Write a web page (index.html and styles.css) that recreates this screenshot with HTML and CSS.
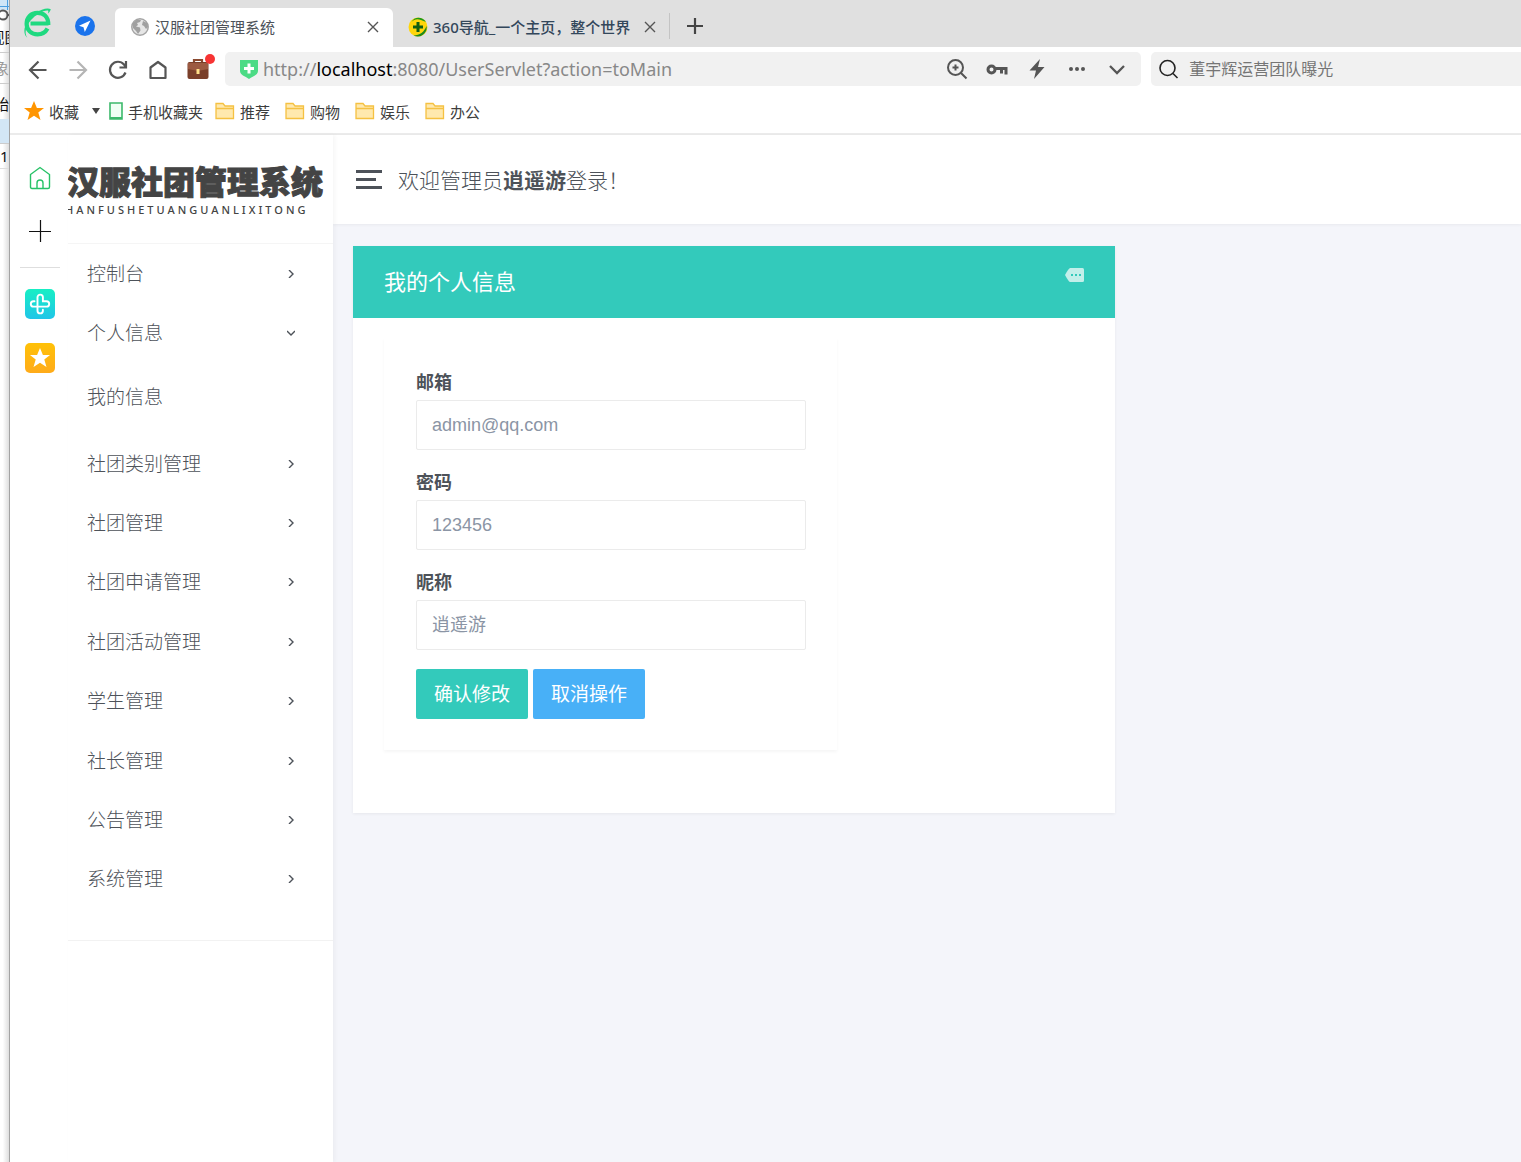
FILE: index.html
```html
<!DOCTYPE html>
<html lang="zh-CN">
<head>
<meta charset="utf-8">
<title>汉服社团管理系统</title>
<link rel="stylesheet" href="styles.css">
</head>
<body>
<div class="desktop">
  <div class="peek" aria-hidden="true">
    <div class="peek-top"><svg width="9" height="30" viewBox="0 0 9 30"><path d="M0 6.500h9M7.500 0v10" stroke="#4b9fe0" fill="none"/><circle cx="3" cy="15" r="4.500" fill="none" stroke="#555" stroke-width="2"/><path d="M7 15h2" stroke="#555" stroke-width="2"/></svg></div>
    <div class="peek-row peek-menu"><span>视图</span></div>
    <div class="peek-row peek-search"><span>对象</span></div>
    <div class="peek-row peek-start"><span>开始</span></div>
    <div class="peek-band"></div>
    <div class="peek-num">1</div>
  </div>

  <div class="browser">
    <header class="tabs">
      <svg class="brand" width="30" height="32" viewBox="0 0 30 32"><path d="M8.500 16.500H26.500M26.300 18C26.500 9 21 5.800 15.500 5.800 9 5.800 4.600 10.500 4.600 16.800c0 6.500 4.900 10.500 10.900 10.500 4.500 0 8-2 10-5.800" fill="none" stroke="#1fd980" stroke-width="4.200"/><path d="M5.500 31C-1 26 3 13 14 6 19 2.500 25 .5 28.800 2.200c-.8 2-1.500 3.500-2.800 4.300.4-1.500.4-2.400 0-3C21 3 14 7.500 9 13 3.500 19 2 26 5.500 31z" fill="#1fd980"/></svg>
      <svg class="send" width="20" height="20" viewBox="0 0 20 20"><circle cx="10" cy="10" r="10" fill="#1a73ec"/><path d="M15.500 4.500 4 9.800l4.500 1.400 1.300 4.800z" fill="#fff"/></svg>
      <div class="tab tab-active">
        <svg width="18" height="18" viewBox="0 0 18 18"><circle cx="9" cy="9" r="8.200" fill="#e6e6e6" stroke="#a5a5a5" stroke-width="1.500"/><path d="M2 5 6 1.500l4 .5-1 2-3 1 1 2-2 1.500 4 1 .5 3L7 16l-2-3-3-3zM12 3l4 2 1 4-2 2-2-3-2-1z" fill="#a0a0a0"/></svg>
        <span class="tab-title">汉服社团管理系统</span>
        <button class="close" aria-label="关闭标签页"><svg width="12" height="12" viewBox="0 0 12 12"><path d="m1 1 10 10M11 1 1 11"/></svg></button>
      </div>
      <div class="tab tab-second">
        <svg width="20" height="20" viewBox="0 0 20 20"><circle cx="10" cy="10" r="9.500" fill="#ffd60a"/><path d="M3.500 5C6 0 14-1 18 5l-5-2C9 1.500 6 2.500 3.500 5z" fill="#1c9a1c"/><path d="M18.500 9a9 9 0 0 1-13 9.500C12 18.500 16 15 18.500 9z" fill="#1c8a1c"/><path d="M10 5v10M5 10h10" stroke="#115f11" stroke-width="3"/></svg>
        <span class="tab-title">360导航_一个主页，整个世界</span>
        <button class="close" aria-label="关闭标签页"><svg width="12" height="12" viewBox="0 0 12 12"><path d="m1 1 10 10M11 1 1 11"/></svg></button>
      </div>
      <button class="new-tab" aria-label="新标签页"><svg width="16" height="16" viewBox="0 0 16 16"><path d="M8 0v16M0 8h16" stroke="#444" stroke-width="2.200"/></svg></button>
    </header>

    <div class="toolbar">
      <button class="tool" aria-label="后退"><svg width="20" height="20" viewBox="0 0 20 20"><path d="M18.500 10H2M10.500 1.500 2 10l8.500 8.500" stroke="#555"/></svg></button>
      <button class="tool" aria-label="前进"><svg width="20" height="20" viewBox="0 0 20 20"><path d="M1.500 10H18M9.500 1.500 18 10l-8.500 8.500" stroke="#b5b5b5"/></svg></button>
      <button class="tool" aria-label="刷新"><svg width="20" height="20" viewBox="0 0 20 20"><path d="M17.500 12.500A8 8 0 1 1 16 4.500l1.500 2M18 1v6.500h-6.500" stroke="#555"/></svg></button>
      <button class="tool" aria-label="主页"><svg width="20" height="20" viewBox="0 0 20 20"><path d="m10 2 7.500 5.500V18h-15V7.500z" stroke="#555" stroke-linejoin="round"/></svg></button>
      <button class="tool tool-case" aria-label="工具箱"><svg width="22" height="22" viewBox="0 0 22 22"><path d="M7 5V2h8v3" stroke="#8a4a30"/><rect x="0.500" y="4" width="21" height="17" rx="2" fill="#7a3f2a"/><path d="M1 5h20v6l-10 2-10-2z" fill="#9c5a41"/><rect x="9.500" y="11" width="3" height="5" fill="#ffe08a"/></svg><i class="dot"></i></button>
      <div class="omnibox">
        <svg width="18" height="20" viewBox="0 0 18 20"><path d="M0 1h18v11c0 4-5 5-9 8-4-3-9-4-9-8z" fill="#4cdb85"/><path d="M9 4.500v10M4 9.500h10" stroke="#fff" stroke-width="3"/></svg>
        <div class="url" role="textbox" aria-label="地址">http://<b>localhost</b>:8080/UserServlet?action=toMain</div>
        <div class="omni-actions">
          <button aria-label="缩放"><svg width="22" height="22" viewBox="0 0 22 22"><circle cx="9.500" cy="9.500" r="7.500"/><path d="m15 15 5.500 5.500M9.500 6.500v6M6.500 9.500h6"/></svg></button>
          <button aria-label="密码"><svg width="22" height="22" viewBox="0 0 22 22"><circle cx="5.500" cy="11.500" r="3.500" stroke-width="3"/><path d="M9 10.500h11v6M15.500 11v4.500" stroke-width="3"/></svg></button>
          <button aria-label="极速模式"><svg width="22" height="22" viewBox="0 0 22 22"><path d="M14 1 3.500 12.500H10L8 21l10.500-12H12z" fill="#555" stroke="none"/></svg></button>
          <button aria-label="更多"><svg width="22" height="22" viewBox="0 0 22 22"><g fill="#555" stroke="none"><circle cx="5" cy="11" r="2"/><circle cx="11" cy="11" r="2"/><circle cx="17" cy="11" r="2"/></g></svg></button>
          <button aria-label="展开"><svg width="22" height="22" viewBox="0 0 22 22"><path d="m4 8 7 7 7-7" stroke-width="2.300"/></svg></button>
        </div>
      </div>
      <div class="search">
        <svg width="20" height="20" viewBox="0 0 20 20"><circle cx="8.500" cy="9" r="7.500"/><path d="m14 14.500 4.500 4.500"/></svg>
        <input type="text" aria-label="搜索" placeholder="董宇辉运营团队曝光">
      </div>
    </div>

    <nav class="bookmarks" aria-label="收藏栏">
      <a href="#" class="fav"><svg width="20" height="20" viewBox="0 0 20 20"><path d="m10 0 2.900 7H20l-5.700 4.600L16.500 19 10 14.700 3.500 19l2.200-7.400L0 7h7.100z" fill="#ff9500"/></svg>收藏</a>
      <button class="caret" aria-label="收藏菜单"><svg width="8" height="6" viewBox="0 0 8 6"><path d="M0 0h8L4 6z" fill="#444"/></svg></button>
      <a href="#" class="phone"><svg width="14" height="18" viewBox="0 0 14 18"><path d="M1 1h12v16H1z" fill="#f0fff4" stroke="#3cb96b" stroke-width="1.600"/><path d="M1 16h12" stroke="#3cb96b" stroke-width="2"/></svg>手机收藏夹</a>
      <a href="#"><svg width="20" height="18" viewBox="0 0 20 18"><path d="M1 16.500v-15h7l2 2.500h8.500v12.500zM1 6.500h17.500" fill="#ffe9ae" stroke="#f5c142" stroke-width="1.300"/></svg>推荐</a>
      <a href="#"><svg width="20" height="18" viewBox="0 0 20 18"><path d="M1 16.500v-15h7l2 2.500h8.500v12.500zM1 6.500h17.500" fill="#ffe9ae" stroke="#f5c142" stroke-width="1.300"/></svg>购物</a>
      <a href="#"><svg width="20" height="18" viewBox="0 0 20 18"><path d="M1 16.500v-15h7l2 2.500h8.500v12.500zM1 6.500h17.500" fill="#ffe9ae" stroke="#f5c142" stroke-width="1.300"/></svg>娱乐</a>
      <a href="#"><svg width="20" height="18" viewBox="0 0 20 18"><path d="M1 16.500v-15h7l2 2.500h8.500v12.500zM1 6.500h17.500" fill="#ffe9ae" stroke="#f5c142" stroke-width="1.300"/></svg>办公</a>
    </nav>

    <div class="page">
      <aside class="rail">
        <button aria-label="首页"><svg width="22" height="24" viewBox="0 0 22 24"><path d="M1.500 8.500 11 1.500l9.500 7V21q0 1.500-1.500 1.500H3Q1.500 22.500 1.500 21zM8 22v-5a3 3 0 0 1 6 0v5" fill="none" stroke="#27c267" stroke-width="1.400"/></svg></button>
        <button aria-label="添加"><svg width="22" height="22" viewBox="0 0 22 22"><path d="M11.500 0v22M0 11.500h22" stroke="#111" stroke-width="1.200"/></svg></button>
        <hr>
        <button class="app app-health" aria-label="健康"><svg width="22" height="22" viewBox="0 0 22 22"><path d="M8.500 13.500V4.300a2.700 2.700 0 0 1 5.400 0v3.900h3.600a2.700 2.700 0 0 1 0 5.400h-13a2.700 2.700 0 0 1 0-5.400h1M8.500 13.500v4.200a2.700 2.700 0 0 0 5.400 0v-1" fill="none" stroke="#fff" stroke-width="1.900" stroke-linecap="round"/></svg></button>
        <button class="app app-star" aria-label="收藏"><svg width="20" height="20" viewBox="0 0 20 20"><path d="m10 0 2.900 7H20l-5.700 4.600L16.500 19 10 14.700 3.500 19l2.200-7.400L0 7h7.100z" fill="#fff"/></svg></button>
      </aside>

      <aside class="sidebar">
        <div class="logo">
          <strong>汉服社团管理系统</strong>
          <small>HANFUSHETUANGUANLIXITONG</small>
        </div>
        <nav class="menu">
          <div class="menu-group menu-first">
            <a href="#">控制台<svg width="8" height="8" viewBox="0 0 8 8"><path d="m2 0 4 4-4 4"/></svg></a>
            <a href="#">个人信息<svg width="8" height="8" viewBox="0 0 8 8"><path d="m0 2 4 4 4-4"/></svg></a>
          </div>
          <a href="#" class="submenu">我的信息</a>
          <div class="menu-group menu-rest">
            <a href="#">社团类别管理<svg width="8" height="8" viewBox="0 0 8 8"><path d="m2 0 4 4-4 4"/></svg></a>
            <a href="#">社团管理<svg width="8" height="8" viewBox="0 0 8 8"><path d="m2 0 4 4-4 4"/></svg></a>
            <a href="#">社团申请管理<svg width="8" height="8" viewBox="0 0 8 8"><path d="m2 0 4 4-4 4"/></svg></a>
            <a href="#">社团活动管理<svg width="8" height="8" viewBox="0 0 8 8"><path d="m2 0 4 4-4 4"/></svg></a>
            <a href="#">学生管理<svg width="8" height="8" viewBox="0 0 8 8"><path d="m2 0 4 4-4 4"/></svg></a>
            <a href="#">社长管理<svg width="8" height="8" viewBox="0 0 8 8"><path d="m2 0 4 4-4 4"/></svg></a>
            <a href="#">公告管理<svg width="8" height="8" viewBox="0 0 8 8"><path d="m2 0 4 4-4 4"/></svg></a>
            <a href="#">系统管理<svg width="8" height="8" viewBox="0 0 8 8"><path d="m2 0 4 4-4 4"/></svg></a>
          </div>
        </nav>
      </aside>

      <div class="main">
        <header class="topbar">
          <button class="burger" aria-label="切换菜单"><svg width="26" height="20" viewBox="0 0 26 20"><path d="M0 1.500h26M0 9.500h20M0 17.500h26" stroke="#4d5259" stroke-width="3"/></svg></button>
          <p>欢迎管理员<b>逍遥游</b>登录！</p>
        </header>
        <main class="content">
          <section class="card">
            <header class="card-head">
              <h1>我的个人信息</h1>
              <svg width="19" height="14" viewBox="0 0 19 14"><path d="M5 0h12.500Q19 0 19 1.500v11q0 1.500-1.500 1.500H5Q3.500 13.500 0 7 3.500.5 5 0z" fill="#c3efea"/><path d="M6 6h2v2H6zM10 6h2v2h-2zM14 6h2v2h-2z" fill="#33cabb"/></svg>
            </header>
            <div class="card-body">
              <form class="profile">
                <label for="email">邮箱</label>
                <input id="email" type="text" placeholder="admin@qq.com">
                <label for="password">密码</label>
                <input id="password" type="text" placeholder="123456">
                <label for="nickname">昵称</label>
                <input id="nickname" type="text" placeholder="逍遥游">
                <div class="actions">
                  <button type="button" class="btn btn-primary">确认修改</button>
                  <button type="button" class="btn btn-info">取消操作</button>
                </div>
              </form>
            </div>
          </section>
        </main>
      </div>
    </div>
  </div>
</div>
</body>
</html>
```
FILE: styles.css
```css
* { box-sizing: border-box; }
body {
  margin: 0;
  font-family: "Noto Sans", "Noto Sans CJK SC", sans-serif;
  font-size: 15px;
  color: #4d5259;
}
button {
  display: flex;
  align-items: center;
  justify-content: center;
  padding: 0;
  border: 0;
  background: none;
  font: inherit;
  color: inherit;
}
a { color: inherit; text-decoration: none; }
input { font: inherit; min-width: 0; }
svg { flex: none; }

.desktop { display: grid; grid-template-columns: 9px minmax(0, 1fr); min-height: 100vh; }

/* Window showing behind the browser */
.peek { overflow: hidden; background: linear-gradient(90deg, #fff 30%, #dedede); color: #111; }
.peek-top { height: 26px; background: linear-gradient(#cfe6f7 10px, transparent 10px); }
.peek-row { display: flex; justify-content: center; align-items: center; height: 27px; border-bottom: 1px solid #ccc; line-height: 20px; }
.peek-row span { flex: none; }
.peek-menu { padding-bottom: 4px; }
.peek-search { justify-content: flex-end; height: 31px; color: #999; }
.peek-start { justify-content: flex-end; height: 35px; padding-top: 4px; border: 0; }
.peek-band { height: 25px; background: #d3e6f5; border-bottom: 1px solid #ccc; }
.peek-num { height: 25px; line-height: 25px; border-bottom: 1px solid #ddd; }

.browser { display: flex; flex-direction: column; border-left: 1px solid #a3a3a3; background: #fff; }

/* Tabs */
.tabs { display: flex; align-items: flex-end; height: 47px; background: #e0e0e0; }
.brand { margin: 0 20px 8px 12px; }
.send { margin: 0 20px 11px 3px; }
.tab { display: flex; align-items: center; height: 39px; padding: 0 15px 2px; gap: 5px; }
.tab-active { width: 278px; padding-right: 14px; padding-left: 16px; gap: 6px; background: #fff; border-radius: 6px 6px 0 0; }
.tab-title { flex: 1; white-space: nowrap; }
.tab-second { width: 276px; padding-right: 13px; color: #33475b; font-weight: 500; }
.close { width: 12px; height: 12px; }
.close svg { fill: none; stroke: #555; stroke-width: 1.4; }
.new-tab { width: 50px; height: 26px; margin-bottom: 8px; border-left: 1px solid #c4c4c4; }

/* Toolbar */
.toolbar { display: flex; align-items: center; height: 44px; padding-left: 8px; }
.tool { position: relative; width: 40px; height: 34px; padding-top: 2px; }
.tool svg { fill: none; stroke-width: 2.2; }
.tool-case { width: 39px; padding-top: 0; }
.dot { position: absolute; top: 2px; right: 2px; width: 10px; height: 10px; border-radius: 50%; background: #f73434; }
.omnibox {
  display: flex;
  align-items: center;
  flex: 916 1 0;
  height: 34px;
  margin: 0 10px 0 8px;
  padding: 0 13px 0 15px;
  gap: 5px;
  border-radius: 5px;
  background: #f1f1f1;
}
.url { flex: 1; overflow: hidden; white-space: nowrap; font-size: 18px; color: #888; }
.url b { font-weight: 400; color: #000; }
.omni-actions { display: flex; gap: 18px; }
.omni-actions svg { fill: none; stroke: #555; stroke-width: 2; }
.search { display: flex; align-items: center; flex: 373 1 0; height: 34px; padding-left: 8px; gap: 10px; border-radius: 5px 0 0 5px; background: #f1f1f1; }
.search svg { fill: none; stroke: #222; stroke-width: 1.600; }
.search input { flex: 1; height: 30px; padding: 0; border: 0; background: none; font-size: 16px; }
.search input::placeholder { color: #757575; }

/* Bookmarks */
.bookmarks { display: flex; align-items: center; height: 44px; padding: 0 14px 2px; gap: 15px; border-bottom: 2px solid #ebebeb; color: #3d3d3d; }
.bookmarks a { display: flex; align-items: center; gap: 5px; white-space: nowrap; }
.bookmarks .phone { margin-right: -3px; }
.caret { width: 8px; margin: 0 -6px 0 -2px; }

/* Page */
.page { display: flex; flex: 1; background: #f4f5fa; }
.rail { display: flex; flex-direction: column; align-items: center; width: 58px; padding: 30px 0 0 2px; background: #fff; }
.rail > button { height: 26px; margin-bottom: 27px; }
.rail hr { width: 40px; margin: -4px 0 21px; border: 0; border-top: 1px solid #dedede; }
.rail .app { width: 30px; height: 30px; margin-bottom: 24px; border-radius: 5px; }
.app-health { background: linear-gradient(#17efc4, #20c5e8); }
.app-star { background: linear-gradient(#ffc107, #ffab1a); }

.sidebar { width: 265px; background: #fff; box-shadow: 2px 0 4px rgba(0, 0, 0, .04); z-index: 1; }
.logo { height: 109px; padding-top: 24px; overflow: hidden; border-bottom: 1px solid #f5f5f5; color: #444; }
.logo strong, .logo small { display: block; white-space: nowrap; }
.logo strong { margin-left: -1px; font-size: 32px; font-weight: 900; line-height: 46px; -webkit-text-stroke: 1px #444; }
.logo small { margin-left: -3px; font-size: 11px; font-weight: 500; line-height: 10px; letter-spacing: 3px; }
.menu { padding-bottom: 31px; border-bottom: 1px solid #f2f2f2; font-size: 19px; font-weight: 300; }
.menu-group { display: grid; grid-auto-rows: 1fr; }
.menu-first { min-height: 118px; }
.menu-rest { min-height: 475px; }
.menu a { display: flex; align-items: center; justify-content: space-between; padding: 0 38px 2px 19px; }
.menu .submenu { height: 72px; padding-bottom: 4px; }
.menu svg { margin-top: 2px; fill: none; stroke: #4d5259; stroke-width: 1.400; }

.main { flex: 1; min-width: 0; }
.topbar { display: flex; align-items: center; height: 89px; padding: 0 23px; gap: 16px; background: #fff; box-shadow: 0 1px 3px rgba(0, 0, 0, .05); font-size: 21px; font-weight: 300; }
.topbar p { margin: 0; padding-bottom: 2px; }
.topbar b { font-weight: 700; }
.content { display: grid; grid-template-columns: 2fr 1fr; padding: 22px 25px 22px 20px; }
.card { background: #fff; box-shadow: 0 1px 3px rgba(0, 0, 0, .06); }
.card-head { display: flex; justify-content: space-between; height: 72px; padding: 22px 31px; background: #33cabb; color: #fff; }
.card-head h1 { margin: 0; font-size: 22px; font-weight: 400; line-height: 26px; }
.card-body { padding: 20px 31px 63px; }
.profile { display: flex; flex-direction: column; max-width: 453px; padding: 32px 31px 31px 32px; background: #fff; box-shadow: 0 2px 3px rgba(0, 0, 0, .04); font-size: 18px; }
.profile label { height: 30px; line-height: 24px; font-weight: 700; }
.profile input { height: 50px; margin-bottom: 20px; padding: 0 15px; border: 1px solid #ebebeb; border-radius: 2px; font-family: "Liberation Sans", "Noto Sans CJK SC", sans-serif; }
.profile input::placeholder { color: #8b95a5; }
.actions { display: flex; gap: 5px; margin-top: -1px; }
.btn { width: 112px; height: 50px; padding-bottom: 3px; border-radius: 2px; font-size: 19px; color: #fff; }
.btn-primary { background: #33cabb; }
.btn-info { background: #48b0f7; }
```
